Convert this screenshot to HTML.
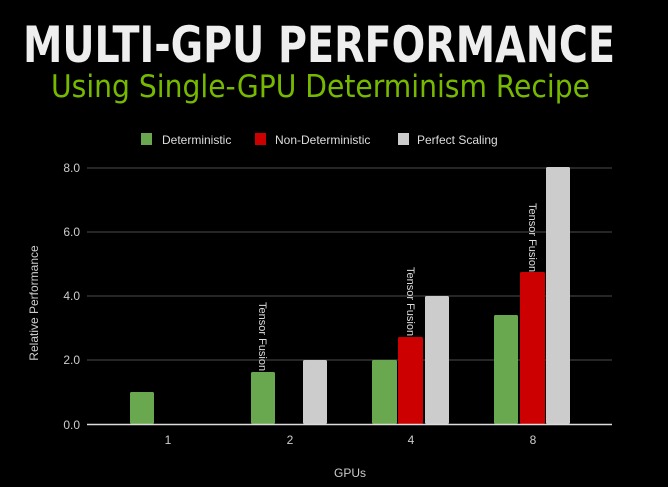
<!DOCTYPE html>
<html><head><style>
html,body{margin:0;padding:0;background:#000;}
body{width:668px;height:487px;overflow:hidden;}
</style></head><body>
<svg width="668" height="487" xmlns="http://www.w3.org/2000/svg" style="display:block">
<rect width="668" height="487" fill="#000"/>
<text x="23" y="62" font-family="DejaVu Sans Condensed, DejaVu Sans, sans-serif" font-weight="bold" font-size="50" fill="#eeeeee" textLength="592" lengthAdjust="spacingAndGlyphs">MULTI-GPU PERFORMANCE</text>
<text x="51" y="97" font-family="DejaVu Sans Condensed, DejaVu Sans, sans-serif" font-size="31" fill="#76b900" textLength="539" lengthAdjust="spacingAndGlyphs">Using Single-GPU Determinism Recipe</text>
<g font-family="Liberation Sans, sans-serif" font-size="12" fill="#ddd">
<rect x="141" y="133" width="11" height="12" fill="#6aa84f"/><text x="162" y="144">Deterministic</text>
<rect x="255" y="133" width="11" height="12" fill="#cc0000"/><text x="275" y="144">Non-Deterministic</text>
<rect x="398" y="133" width="11" height="12" fill="#cccccc"/><text x="417" y="144">Perfect Scaling</text>
</g>
<g stroke="#333" stroke-width="1.5">
<line x1="87" y1="168" x2="612" y2="168"/><line x1="87" y1="232" x2="612" y2="232"/>
<line x1="87" y1="296" x2="612" y2="296"/><line x1="87" y1="360" x2="612" y2="360"/>
</g>
<g font-family="Liberation Sans, sans-serif" font-size="12" fill="#ccc" text-anchor="end">
<text x="80" y="172">8.0</text><text x="80" y="236">6.0</text><text x="80" y="300">4.0</text><text x="80" y="364">2.0</text><text x="80" y="429">0.0</text>
</g>
<g>
<rect x="130" y="392" width="24" height="32" rx="1.5" fill="#6aa84f"/>
<rect x="251" y="372" width="24" height="52" rx="1.5" fill="#6aa84f"/>
<rect x="303" y="360" width="24" height="64" rx="1.5" fill="#cccccc"/>
<rect x="372" y="360" width="25" height="64" rx="1.5" fill="#6aa84f"/>
<rect x="398" y="337" width="25" height="87" rx="1.5" fill="#cc0000"/>
<rect x="425" y="296" width="24" height="128" rx="1.5" fill="#cccccc"/>
<rect x="494" y="315" width="24" height="109" rx="1.5" fill="#6aa84f"/>
<rect x="520" y="272" width="25" height="152" rx="1.5" fill="#cc0000"/>
<rect x="546" y="167" width="24" height="257" rx="1.5" fill="#cccccc"/>
</g>
<line x1="87" y1="424.5" x2="612" y2="424.5" stroke="#ddd" stroke-width="1.5"/>
<g font-family="Liberation Sans, sans-serif" font-size="11" fill="#ddd">
<text transform="translate(259,302) rotate(90)">Tensor Fusion</text>
<text transform="translate(407,267) rotate(90)">Tensor Fusion</text>
<text transform="translate(529,203) rotate(90)">Tensor Fusion</text>
</g>
<g font-family="Liberation Sans, sans-serif" font-size="12" fill="#ccc" text-anchor="middle">
<text x="168" y="444">1</text><text x="290" y="444">2</text><text x="411" y="444">4</text><text x="533" y="444">8</text>
<text x="350" y="477">GPUs</text>
<text transform="translate(38,303) rotate(-90)">Relative Performance</text>
</g>
</svg>
</body></html>
